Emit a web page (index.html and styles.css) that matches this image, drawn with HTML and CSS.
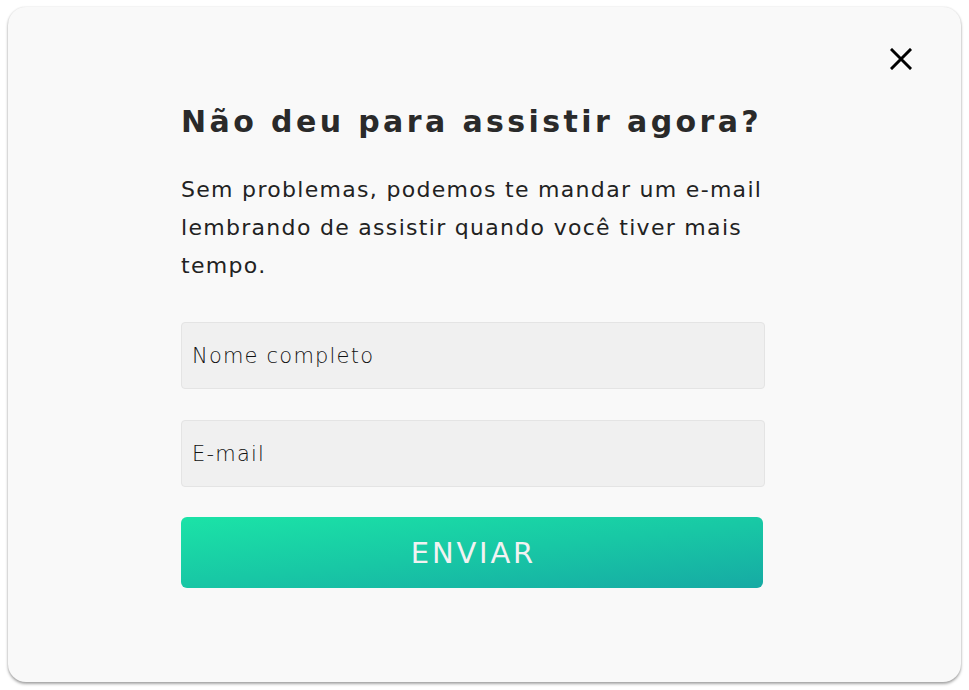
FILE: index.html
```html
<!DOCTYPE html>
<html lang="pt-BR">
<head>
<meta charset="utf-8">
<title>Lembrete</title>
<link rel="stylesheet" href="styles.css">
</head>
<body>
<div class="modal">
  <button class="close" aria-label="Fechar">
    <svg width="22" height="22" viewBox="0 0 22 22"><path d="M2 2 L20 20 M20 2 L2 20" stroke="#000" stroke-width="3" stroke-linecap="square" fill="none"/></svg>
  </button>
  <div class="content">
    <h1 class="title">Não deu para assistir agora?</h1>
    <p class="text">Sem problemas, podemos te mandar um e-mail lembrando de assistir quando você tiver mais tempo.</p>
    <form class="form">
      <input class="field" type="text" placeholder="Nome completo">
      <input class="field" type="email" placeholder="E-mail">
      <button class="submit" type="button">ENVIAR</button>
    </form>
  </div>
</div>
</body>
</html>
```
FILE: styles.css
```css
* { box-sizing: border-box; }
html, body { margin: 0; padding: 0; background: #ffffff; }
body {
  font-family: "DejaVu Sans", "Open Sans", sans-serif;
  padding: 7px 8px 8px 8px;
}
.modal {
  position: relative;
  width: 953px;
  height: 675px;
  background: #f9f9f9;
  border-radius: 18px;
  box-shadow: 0 2px 3px rgba(0,0,0,0.35), 0 0 2px rgba(0,0,0,0.12);
  padding-left: 173px;
}
.close {
  position: absolute;
  top: 41px;
  right: 49px;
  width: 22px;
  height: 22px;
  padding: 0;
  border: 0;
  background: none;
  cursor: pointer;
}
.close svg { display: block; }
.content {
  width: 584px;
  padding-top: 90px;
}
.title {
  margin: 0;
  font-size: 30px;
  font-weight: 700;
  color: #2a2a2a;
  letter-spacing: 3.4px;
  line-height: 50px;
  white-space: nowrap;
}
.text {
  margin: 24px 0 0 0;
  font-size: 22px;
  line-height: 38px;
  color: #222;
  letter-spacing: 1.3px;
}
.form {
  display: flex;
  flex-direction: column;
  margin-top: 37px;
}
.field {
  height: 67px;
  width: 584px;
  background: #f0f0f0;
  border: 1px solid #e4e4e4;
  border-radius: 4px;
  padding: 0 10px;
  font-family: inherit;
  font-size: 21px;
  font-weight: 300;
  letter-spacing: 1.2px;
  color: #111;
  margin-bottom: 31px;
  outline: none;
}
.field::placeholder { color: #111; opacity: 1; }
.field + .field { margin-bottom: 30px; }
.submit {
  width: 582px;
  height: 71px;
  border: 0;
  border-radius: 6px;
  background: linear-gradient(174deg, #1be3a7 0%, #18c8a5 50%, #16aaa4 100%);
  color: #f2f2f2;
  font-family: inherit;
  font-size: 29px;
  font-weight: 400;
  letter-spacing: 2.8px;
  padding: 0 0 0 2.8px;
  cursor: pointer;
}
```
